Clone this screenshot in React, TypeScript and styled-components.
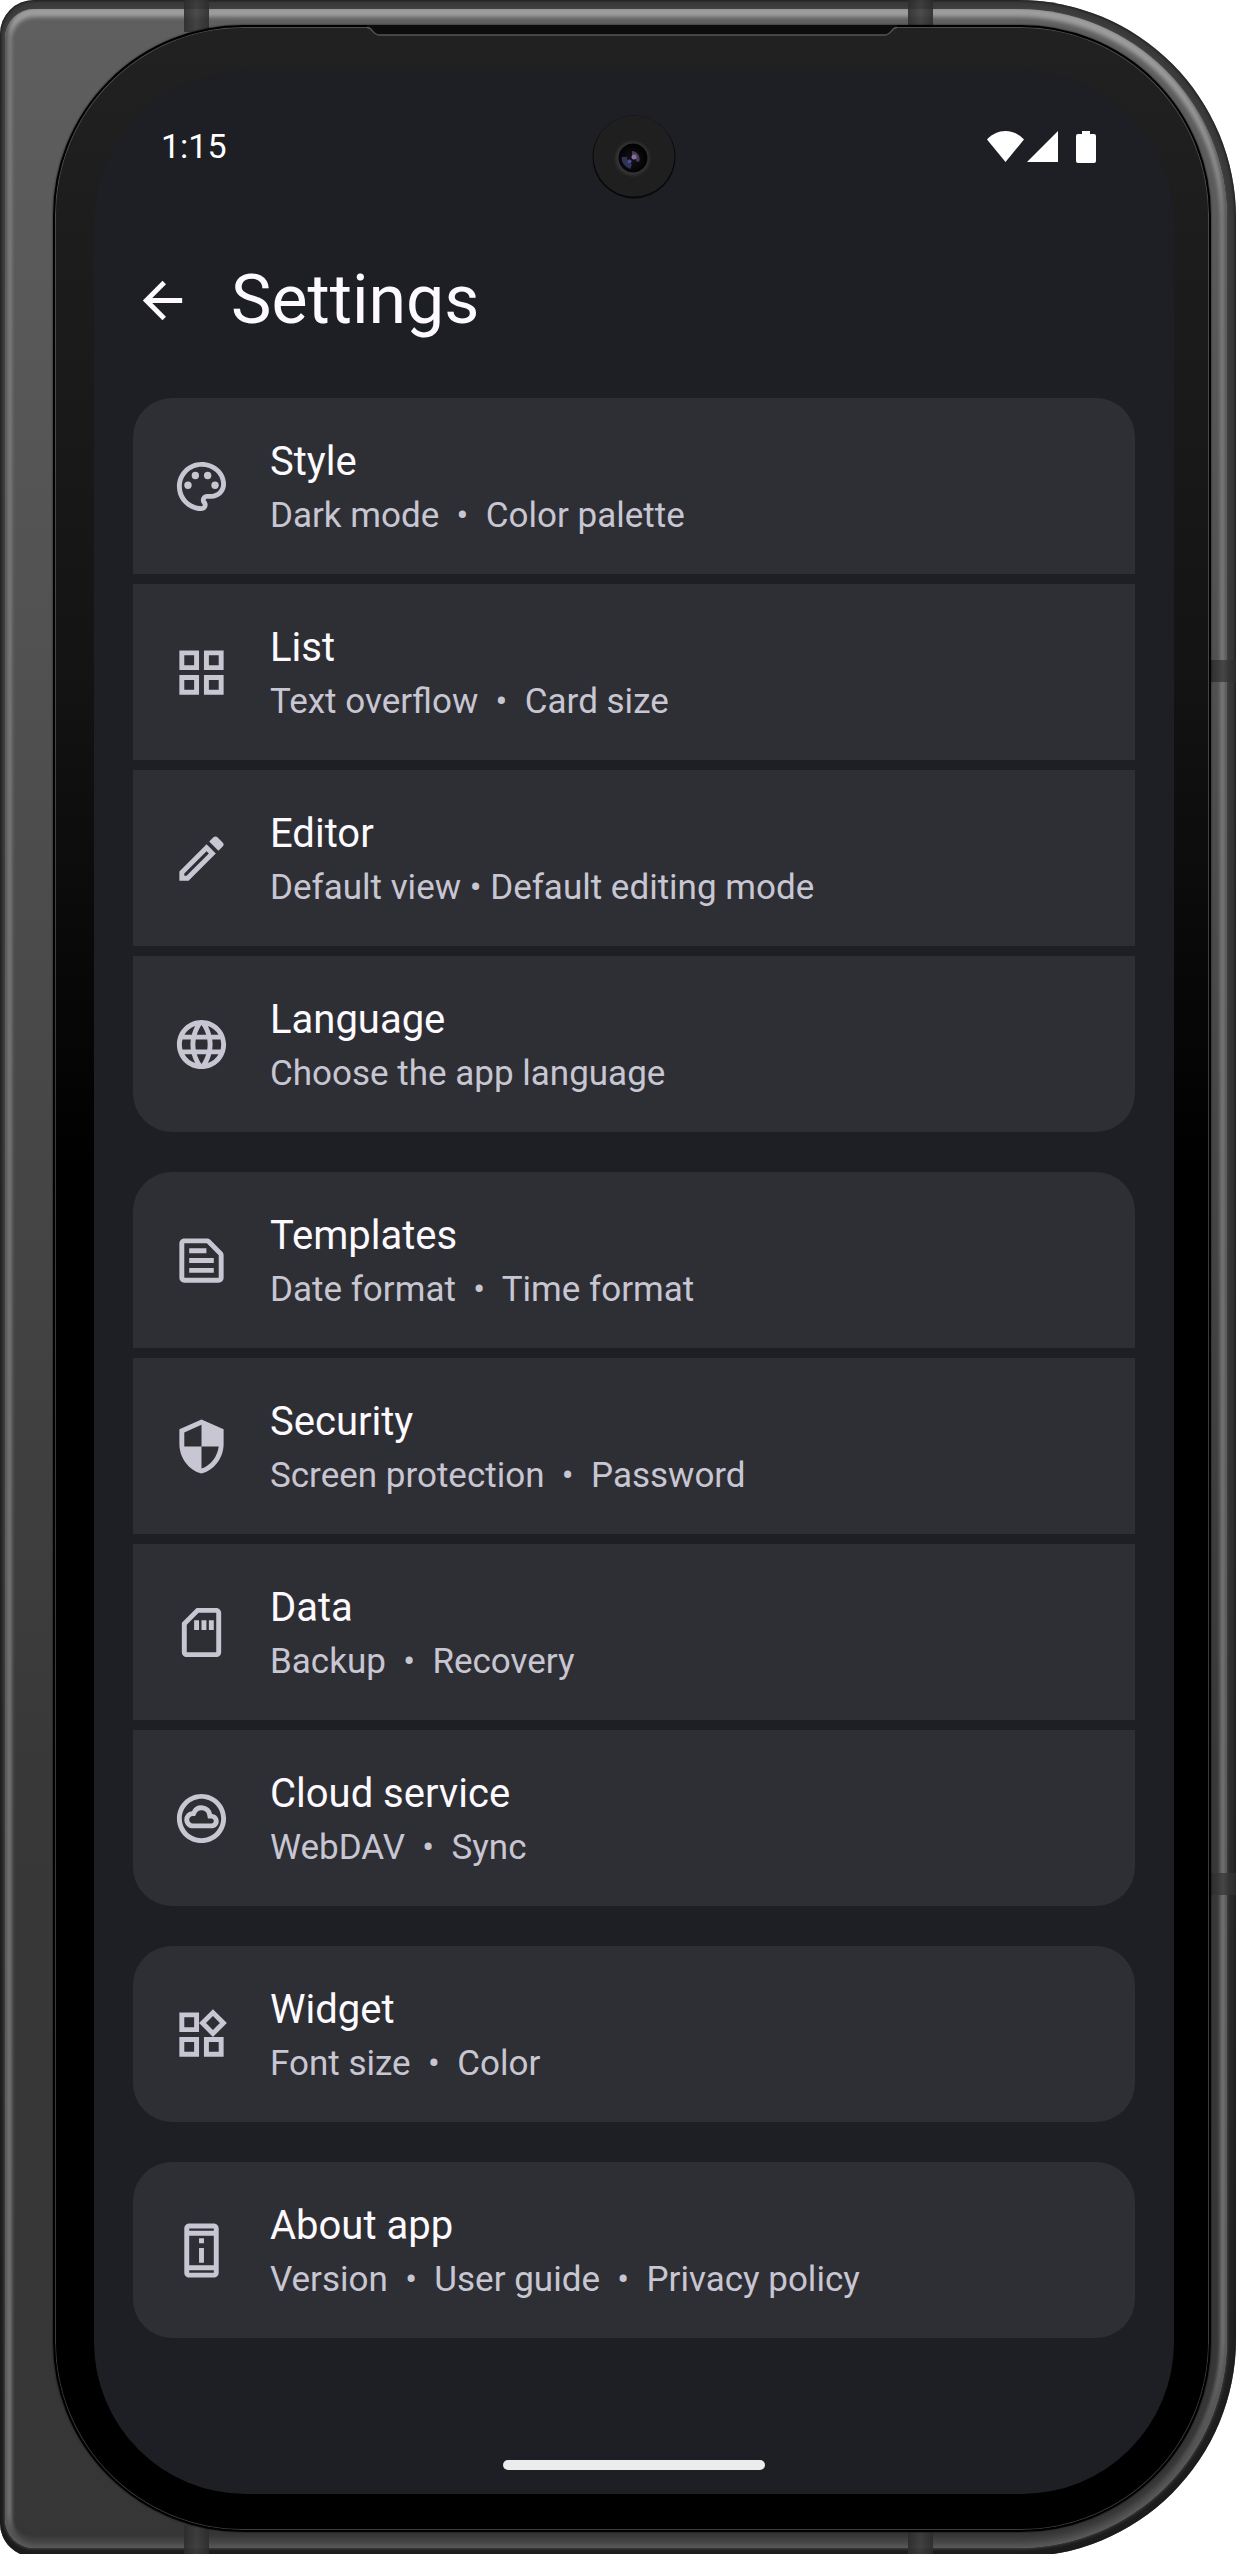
import React from "react";
import styled, { createGlobalStyle, css } from "styled-components";
import type { IconType } from "react-icons";
import {
  MdArrowBack,
  MdLanguage,
  MdOutlineCloudCircle,
  MdOutlineEdit,
  MdOutlineGridView,
  MdOutlinePalette,
  MdOutlinePermDeviceInformation,
  MdOutlineSdCard,
  MdOutlineTextSnippet,
  MdOutlineWidgets,
  MdSecurity,
} from "react-icons/md";

const color = {
  screen: "#1e1f24",
  card: "#2e2f34",
  title: "#fdfaff",
  muted: "#c8c6d2",
};

const GlobalStyle = createGlobalStyle`
  *, *::before, *::after { box-sizing: border-box; }
  body {
    margin: 0;
    background: #fff;
    font-family: Roboto, "Liberation Sans", sans-serif;
  }
`;

/* ---------- Phone body ---------- */

const Device = styled.div`
  position: relative;
  padding: 9px 9px 9px 5px;
  border-radius: 34px 218px 218px 34px;
  overflow: hidden;
  background: linear-gradient(180deg, #3a3c3a 0%, #303030 60%, #1c1c1c 100%);
  box-shadow: inset 0 0 3px 1px #1a1a1a;
`;

const Bevel = styled.div`
  padding: 16px 16px 16px 48px;
  border-radius: 29px 209px 209px 29px;
  background: linear-gradient(180deg, #5f5f5f 0%, #545454 20%, #383838 70%, #363636 100%);
  box-shadow:
    0 0 3px 1px #444,
    inset 0 -6px 4px 4px rgba(70, 70, 70, 0.8),
    inset 0 2px 4px 6px rgba(165, 165, 165, 0.9);
`;

const Glass = styled.div`
  position: relative;
  padding: 44px 35px 36px 39px;
  border: 2px solid #000;
  border-radius: 190px;
  background: linear-gradient(180deg, #212121 0%, #141414 25%, #000 46%);
  box-shadow:
    inset 0 0 0 1px rgba(130, 130, 130, 0.45),
    0 0 2px rgba(0, 0, 0, 0.8);
`;

const Screen = styled.main`
  display: flex;
  flex-direction: column;
  padding: 44px 39px 24px;
  border-radius: 152px;
  background: ${color.screen};
`;

const Band = styled.span<{ $edge: "top" | "bottom" | "right"; $at: string }>`
  position: absolute;
  background: linear-gradient(90deg, rgba(44, 44, 44, 0.9), rgba(62, 62, 62, 0.85), rgba(44, 44, 44, 0.9));
  ${({ $edge, $at }) =>
    $edge === "right"
      ? css`
          right: 0;
          top: ${$at};
          width: 26px;
          height: 22px;
        `
      : css`
          ${$edge}: 0;
          left: ${$at};
          width: 25px;
          height: 32px;
        `}
`;

const Earpiece = styled.svg`
  position: absolute;
  top: -2px;
  left: 50%;
  width: 530px;
  height: 12px;
  transform: translateX(-50%);
`;

/* ---------- Status bar ---------- */

const StatusBar = styled.div`
  display: grid;
  grid-template-columns: 1fr auto 1fr;
  align-items: start;
  padding: 0 28px;
`;

const Clock = styled.time`
  font-size: 34px;
  line-height: 62px;
  color: #fff;
`;

const StatusIcons = styled.div`
  display: flex;
  justify-content: flex-end;
  align-items: center;
  height: 64px;
  padding-right: 11px;
`;

const Camera = styled.svg`
  display: block;
  width: 84px;
  height: 84px;
`;

/* ---------- App bar ---------- */

const AppBar = styled.header`
  display: flex;
  align-items: center;
  gap: 39px;
  margin: 61px 0 58px;
`;

const BackButton = styled.button`
  display: flex;
  padding: 0;
  border: 0;
  background: none;
  color: ${color.title};
  font-size: 59px;
`;

const Heading = styled.h1`
  margin: 0;
  font-size: 68px;
  font-weight: 400;
  line-height: 80px;
  color: ${color.title};
`;

/* ---------- Settings list ---------- */

const Groups = styled.nav`
  display: flex;
  flex-direction: column;
  gap: 40px;
`;

const Group = styled.ul`
  display: flex;
  flex-direction: column;
  gap: 10px;
  margin: 0;
  padding: 0;
  border-radius: 39px;
  overflow: hidden;
  list-style: none;
`;

const Row = styled.a`
  display: flex;
  align-items: center;
  gap: 39px;
  min-height: 176px;
  padding: 0 39px;
  background: ${color.card};
  color: ${color.muted};
  text-decoration: none;

  svg {
    flex: none;
    font-size: 59px;
  }
`;

const Labels = styled.span`
  display: flex;
  flex-direction: column;
`;

const RowTitle = styled.span`
  font-size: 40px;
  line-height: 60px;
  color: ${color.title};
`;

const RowSummary = styled.span`
  font-size: 35px;
  line-height: 48px;
  white-space: pre-wrap;
`;

const HomeBar = styled.div`
  align-self: center;
  width: 262px;
  height: 10px;
  margin-top: 122px;
  border-radius: 5px;
  background: #ececec;
`;

type Item = { id: string; icon: IconType; title: string; summary: string };

const groups: Item[][] = [
  [
    { id: "style", icon: MdOutlinePalette, title: "Style", summary: "Dark mode  •  Color palette" },
    { id: "list", icon: MdOutlineGridView, title: "List", summary: "Text overflow  •  Card size" },
    { id: "editor", icon: MdOutlineEdit, title: "Editor", summary: "Default view • Default editing mode" },
    { id: "language", icon: MdLanguage, title: "Language", summary: "Choose the app language" },
  ],
  [
    { id: "templates", icon: MdOutlineTextSnippet, title: "Templates", summary: "Date format  •  Time format" },
    { id: "security", icon: MdSecurity, title: "Security", summary: "Screen protection  •  Password" },
    { id: "data", icon: MdOutlineSdCard, title: "Data", summary: "Backup  •  Recovery" },
    { id: "cloud", icon: MdOutlineCloudCircle, title: "Cloud service", summary: "WebDAV  •  Sync" },
  ],
  [{ id: "widget", icon: MdOutlineWidgets, title: "Widget", summary: "Font size  •  Color" }],
  [
    {
      id: "about",
      icon: MdOutlinePermDeviceInformation,
      title: "About app",
      summary: "Version  •  User guide  •  Privacy policy",
    },
  ],
];

function FrontCamera() {
  return (
    <Camera viewBox="0 0 84 84" aria-hidden="true">
      <defs>
        <radialGradient id="ring">
          <stop offset="70%" stopColor="#3c3c3c" />
          <stop offset="100%" stopColor="#1f1f1f" />
        </radialGradient>
        <radialGradient id="lens" cx="45%" cy="55%">
          <stop offset="0%" stopColor="#15131c" />
          <stop offset="100%" stopColor="#020203" />
        </radialGradient>
      </defs>
      <circle cx="42" cy="42" r="41.5" fill="#08080a" />
      <circle cx="42" cy="41" r="40.5" fill="#1f1f1f" />
      <circle cx="40.5" cy="43.5" r="19" fill="url(#ring)" />
      <circle cx="41" cy="43" r="14.5" fill="url(#lens)" />
      <path d="M29.500 42a12 12 0 0 0 9 12l1.500-5a7 7 0 0 1-5-7z" fill="#2c3554" />
      <path d="M40 36a8 8 0 0 1 7 11l-3-1a5 5 0 0 0-4-6z" fill="#4a3d58" />
      <circle cx="42" cy="42" r="2.500" fill="#84709c" />
      <circle cx="37.500" cy="46.500" r="2" fill="#514a8c" />
    </Camera>
  );
}

function StatusGlyphs() {
  return (
    <svg width="109" height="33" viewBox="0 0 109 33" fill="#fff" role="img" aria-label="Wi-Fi, signal, battery full">
      <path d="M0 8.5C5 3 11.500 0 18.500 0S32 3 37 8.500L18.500 31z" />
      <path d="M71 0v31H40z" />
      <path d="M95 0h8v3h4a2 2 0 0 1 2 2v25a2 2 0 0 1-2 2H91a2 2 0 0 1-2-2V5a2 2 0 0 1 2-2h4z" />
    </svg>
  );
}

export default function App() {
  return (
    <>
      <GlobalStyle />
      <Device>
        <Bevel>
          <Band $edge="top" $at="184px" />
          <Band $edge="top" $at="908px" />
          <Band $edge="bottom" $at="184px" />
          <Band $edge="bottom" $at="908px" />
          <Band $edge="right" $at="660px" />
          <Band $edge="right" $at="1873px" />
          <Glass>
            <Earpiece viewBox="0 0 530 12" aria-hidden="true">
              <path d="M0 2C6 2 5 10 13 10H517C525 10 524 2 530 2V0H0z" fill="#0c0c0c" />
              <path d="M0 2.500C6 2.500 5 10 13 10H517C525 10 524 2.500 530 2.500" fill="none" stroke="#555" strokeWidth="1.500" />
            </Earpiece>
            <Screen>
              <StatusBar>
                <Clock>1:15</Clock>
                <FrontCamera />
                <StatusIcons>
                  <StatusGlyphs />
                </StatusIcons>
              </StatusBar>
              <AppBar>
                <BackButton type="button" aria-label="Back">
                  <MdArrowBack />
                </BackButton>
                <Heading>Settings</Heading>
              </AppBar>
              <Groups aria-label="Settings">
                {groups.map((items) => (
                  <Group key={items[0].id}>
                    {items.map(({ id, icon: Icon, title, summary }) => (
                      <li key={id}>
                        <Row href={`#${id}`}>
                          <Icon aria-hidden="true" />
                          <Labels>
                            <RowTitle>{title}</RowTitle>
                            <RowSummary>{summary}</RowSummary>
                          </Labels>
                        </Row>
                      </li>
                    ))}
                  </Group>
                ))}
              </Groups>
              <HomeBar />
            </Screen>
          </Glass>
        </Bevel>
      </Device>
    </>
  );
}
